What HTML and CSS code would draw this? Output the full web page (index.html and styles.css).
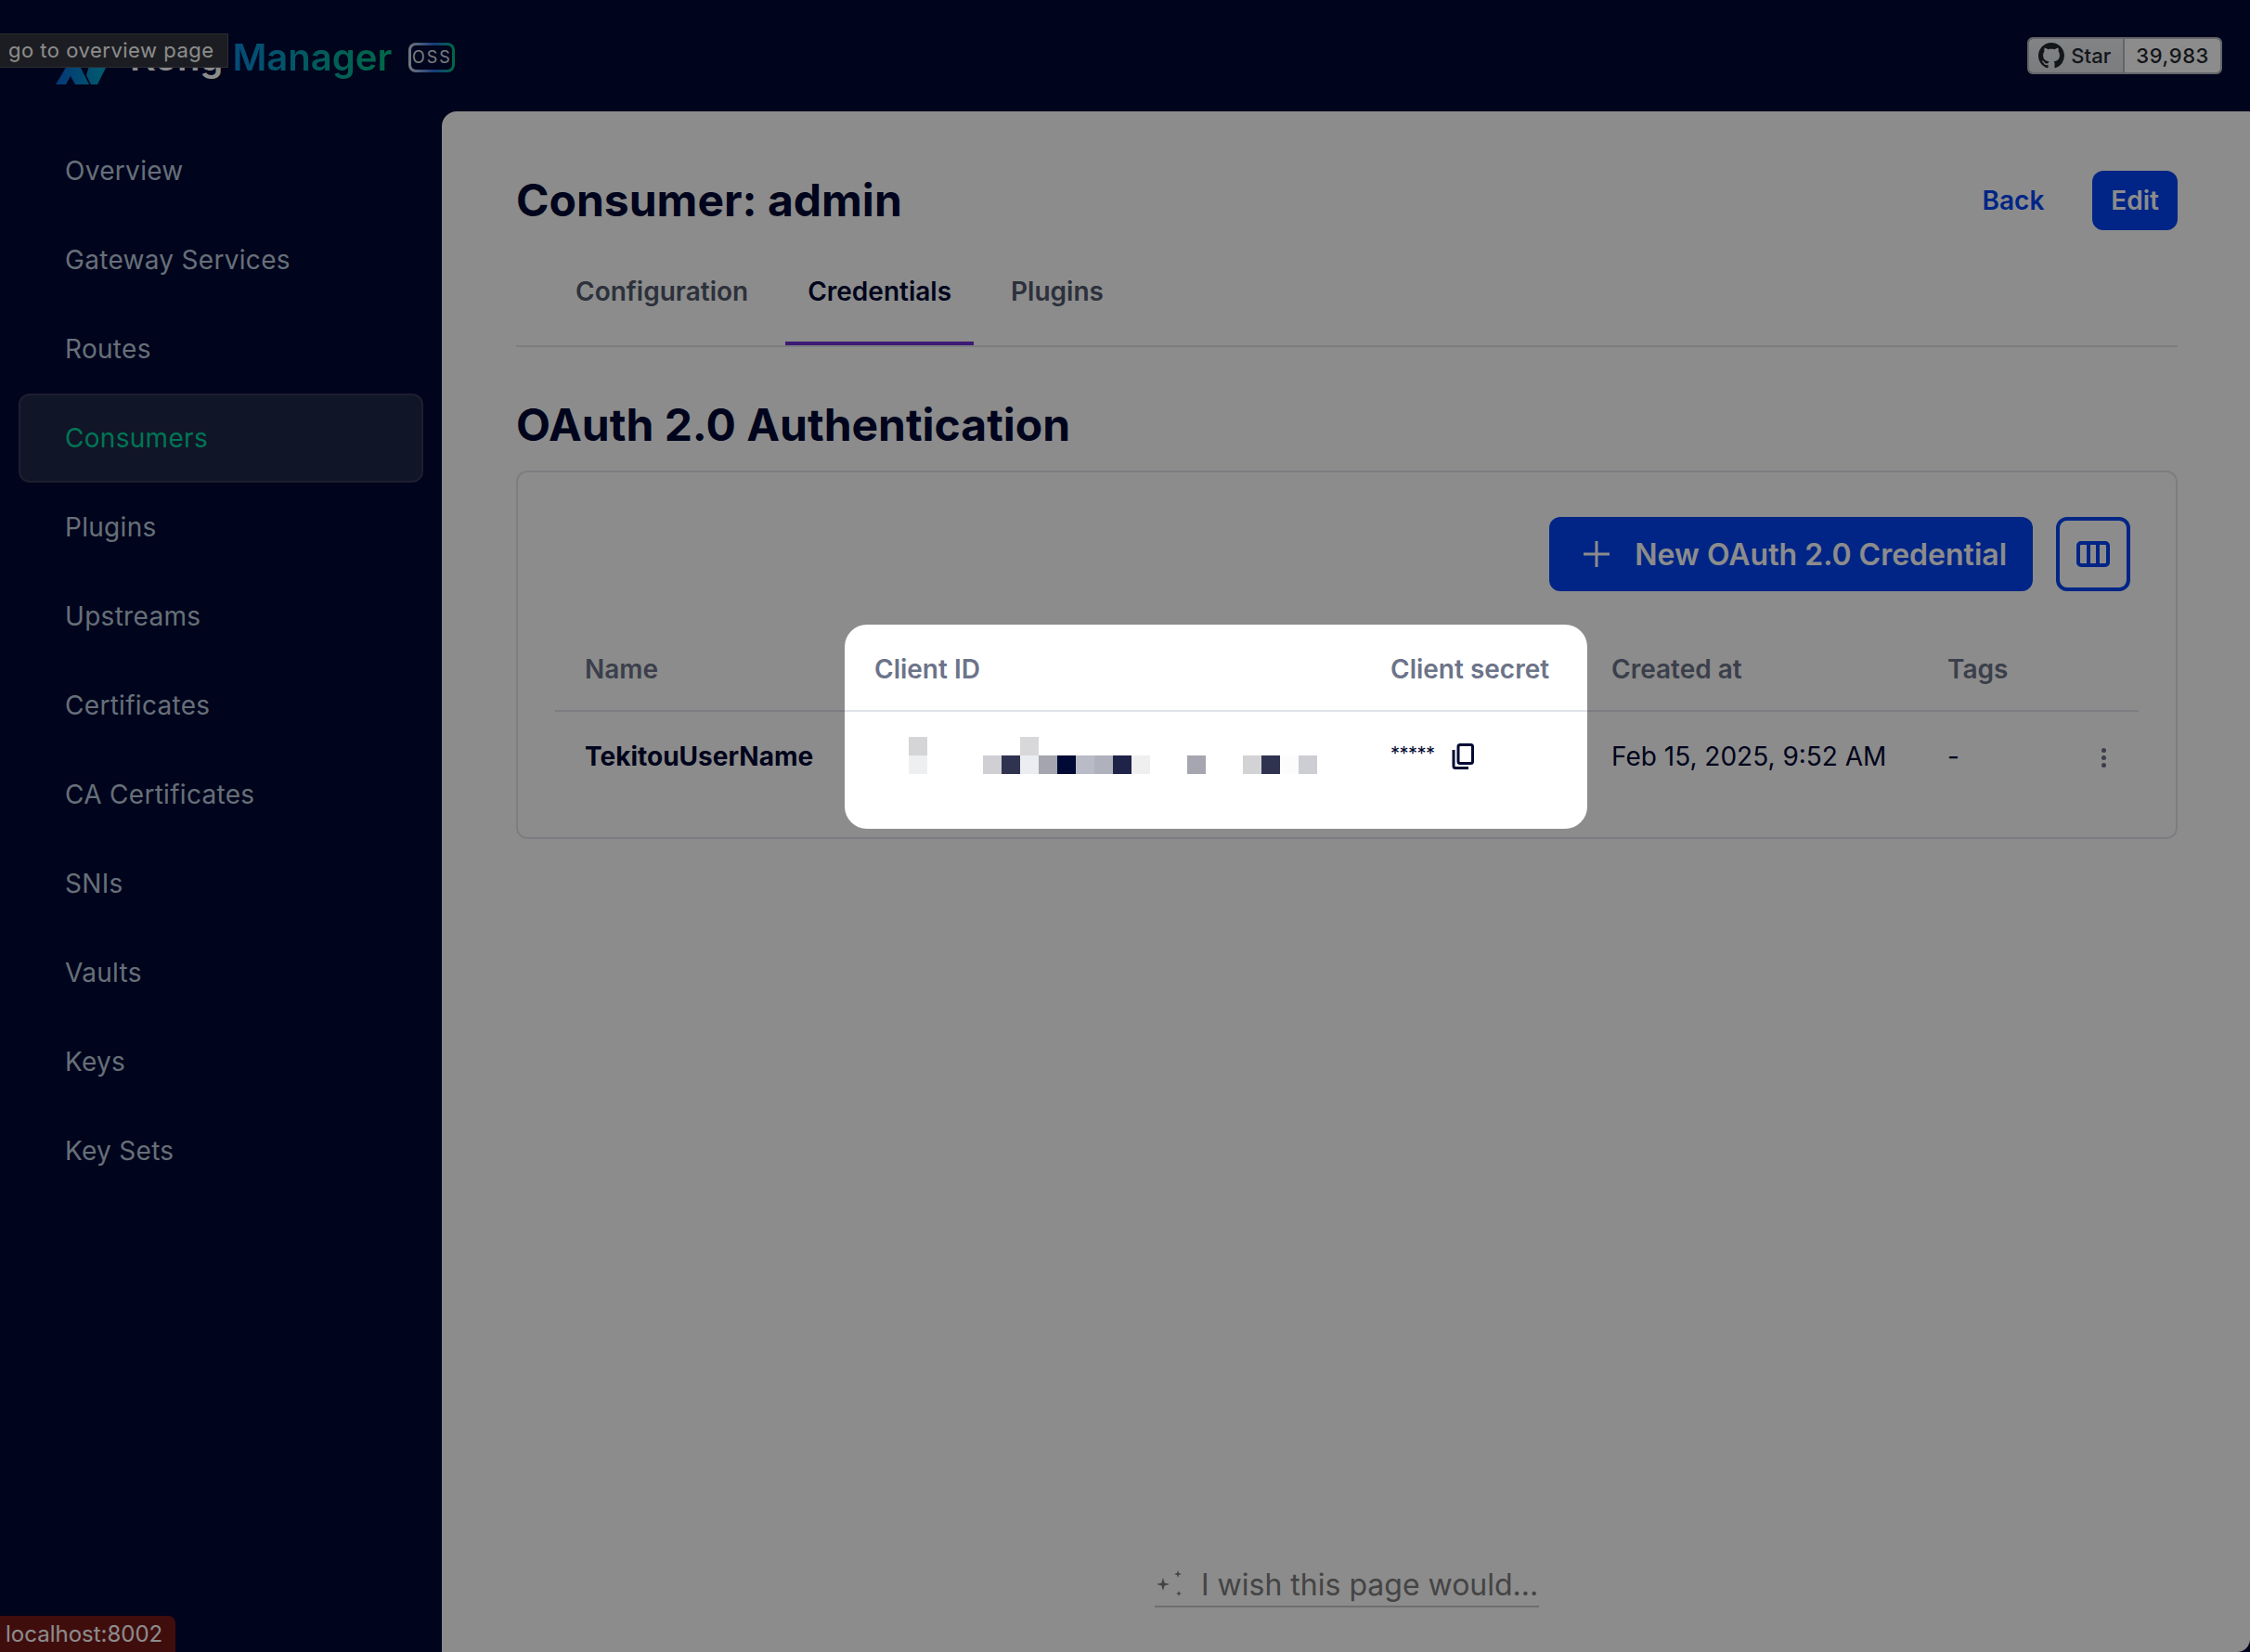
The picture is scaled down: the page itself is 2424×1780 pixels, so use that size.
FILE: index.html
```html
<!DOCTYPE html>
<html lang="en">
<head>
<meta charset="utf-8">
<title>Kong Manager</title>
<link rel="stylesheet" href="styles.css">
</head>
<body>
<div class="app">
  <header class="topbar">
    <a class="brand">
      <svg class="brand-logo" viewBox="0 0 55 50" aria-hidden="true">
        <defs><linearGradient id="lg" x1="0" x2="1" y1="0" y2="0"><stop offset="0" stop-color="#0a66d8"/><stop offset="1" stop-color="#00a8c8"/></linearGradient></defs>
        <path fill="url(#lg)" d="M0 50 12 30h14l10 20H21l-5-9-5 9zM36 30h14l5 0-10 20h-7l-5-10z"/>
      </svg>
      <span class="brand-name"><span class="brand-kong">Kong</span> <span class="brand-manager">Manager</span></span>
      <span class="oss">OSS</span>
    </a>
    <div class="gh">
      <span class="gh-star">
        <svg class="gh-icon" viewBox="0 0 16 16" aria-hidden="true"><path fill="#24292e" d="M8 0C3.58 0 0 3.58 0 8c0 3.54 2.29 6.53 5.47 7.59.4.07.55-.17.55-.38 0-.19-.01-.82-.01-1.49-2.01.37-2.53-.49-2.69-.94-.09-.23-.48-.94-.82-1.13-.28-.15-.68-.52-.01-.53.63-.01 1.08.58 1.23.82.72 1.21 1.87.87 2.33.66.07-.52.28-.87.51-1.07-1.78-.2-3.64-.89-3.64-3.95 0-.87.31-1.59.82-2.15-.08-.2-.36-1.02.08-2.12 0 0 .67-.21 2.2.82.64-.18 1.32-.27 2-.27.68 0 1.36.09 2 .27 1.53-1.04 2.2-.82 2.2-.82.44 1.1.16 1.92.08 2.12.51.56.82 1.27.82 2.15 0 3.07-1.87 3.75-3.65 3.95.29.25.54.73.54 1.48 0 1.07-.01 1.93-.01 2.2 0 .21.15.46.55.38A8.013 8.013 0 0016 8c0-4.42-3.58-8-8-8z"/></svg>
        Star
      </span>
      <span class="gh-count">39,983</span>
    </div>
  </header>

  <nav class="sidebar">
    <a class="nav-item">Overview</a>
    <a class="nav-item">Gateway Services</a>
    <a class="nav-item">Routes</a>
    <a class="nav-item is-active">Consumers</a>
    <a class="nav-item">Plugins</a>
    <a class="nav-item">Upstreams</a>
    <a class="nav-item">Certificates</a>
    <a class="nav-item">CA Certificates</a>
    <a class="nav-item">SNIs</a>
    <a class="nav-item">Vaults</a>
    <a class="nav-item">Keys</a>
    <a class="nav-item">Key Sets</a>
  </nav>

  <main class="main">
    <div class="page-head">
      <h1 class="page-title">Consumer: admin</h1>
      <div class="page-actions">
        <a class="btn-link">Back</a>
        <a class="btn-edit">Edit</a>
      </div>
    </div>
    <div class="tabs">
      <a class="tab">Configuration</a>
      <a class="tab is-active">Credentials</a>
      <a class="tab">Plugins</a>
    </div>
    <h2 class="section-title">OAuth 2.0 Authentication</h2>
    <section class="card">
      <div class="toolbar">
        <a class="btn-new">
          <svg class="plus" viewBox="0 0 30 30" aria-hidden="true"><path d="M15 1v28M1 15h28" fill="none" stroke="currentColor" stroke-width="3"/></svg>
          New OAuth 2.0 Credential
        </a>
        <a class="btn-cols">
          <svg class="cols" viewBox="0 0 36 28" aria-hidden="true"><rect x="2" y="2" width="32" height="24" rx="3" fill="none" stroke="currentColor" stroke-width="4"/><path d="M13 2v24M23 2v24" stroke="currentColor" stroke-width="4"/></svg>
        </a>
      </div>
      <table class="table">
        <colgroup><col class="c-name"><col class="c-id"><col class="c-secret"><col class="c-date"><col class="c-tags"><col class="c-menu"></colgroup>
        <thead>
          <tr><th>Name</th><th>Client ID</th><th>Client secret</th><th>Created at</th><th>Tags</th><th></th></tr>
        </thead>
        <tbody>
          <tr>
            <td class="td-name">TekitouUserName</td>
            <td>
              <svg class="mosaic" viewBox="0 0 440 40" width="440" height="40" shape-rendering="crispEdges" aria-hidden="true">
                <rect x="0" y="0" width="20" height="20" fill="#d5d5d8"/>
                <rect x="120" y="0" width="20" height="20" fill="#d8d8db"/>
                <rect x="0" y="20" width="20" height="20" fill="#eeeff1"/>
                <rect x="80" y="20" width="20" height="20" fill="#cfcfd4"/>
                <rect x="100" y="20" width="20" height="20" fill="#2f3350"/>
                <rect x="120" y="20" width="20" height="20" fill="#ecedf1"/>
                <rect x="140" y="20" width="20" height="20" fill="#a4a5ae"/>
                <rect x="160" y="20" width="20" height="20" fill="#000a35"/>
                <rect x="180" y="20" width="20" height="20" fill="#b9bcc6"/>
                <rect x="200" y="20" width="20" height="20" fill="#afb2bc"/>
                <rect x="220" y="20" width="20" height="20" fill="#1f2347"/>
                <rect x="240" y="20" width="20" height="20" fill="#efefef"/>
                <rect x="300" y="20" width="20" height="20" fill="#a5a6af"/>
                <rect x="360" y="20" width="20" height="20" fill="#d3d3d5"/>
                <rect x="380" y="20" width="20" height="20" fill="#2f3350"/>
                <rect x="400" y="20" width="20" height="20" fill="#fcfcfd"/>
                <rect x="420" y="20" width="20" height="20" fill="#cdced4"/>
              </svg>
            </td>
            <td>
              <span class="secret">*****</span>
              <svg class="copy" viewBox="0 0 24 28" aria-hidden="true"><rect x="7" y="1.5" width="15.5" height="20" rx="2" fill="none" stroke="#000933" stroke-width="3"/><path d="M2 7v17.5a2 2 0 0 0 2 2h14" fill="none" stroke="#000933" stroke-width="3"/></svg>
            </td>
            <td>Feb 15, 2025, 9:52 AM</td>
            <td>-</td>
            <td class="td-menu"><span class="kebab"><i></i><i></i><i></i></span></td>
          </tr>
        </tbody>
      </table>
    </section>
    <div class="wish">
      <svg class="sparkles" viewBox="0 0 32 32" aria-hidden="true"><path fill="#7a7a7a" d="M9 9l1.6 5.4L16 16l-5.400 1.600L9 23l-1.600-5.400L2 16l5.400-1.600zM25 1l1 3 3 1-3 1-1 3-1-3-3-1 3-1zM26 23l.8 2.200L29 26l-2.200.8L26 29l-.8-2.200L23 26l2.200-.8z"/></svg>
      <span>I wish this page would...</span>
    </div>
  </main>
</div>

<div class="tooltip">go to overview page</div>
<div class="host">localhost:8002</div>
<div class="spotlight"></div>
</body>
</html>
```

FILE: styles.css
```css
* { box-sizing: border-box; }
html, body { height: 100%; }
body {
  margin: 0;
  overflow: hidden;
  background: #000933;
  font-family: Inter, "Noto Sans", "Liberation Sans", sans-serif;
  color: #000933;
}
.app {
  display: grid;
  grid-template-columns: 476px 1fr;
  grid-template-rows: 120px 1fr;
  height: 100vh;
}

/* top bar */
.topbar {
  grid-column: 1 / -1;
  display: flex;
  align-items: center;
  justify-content: space-between;
  padding: 0 30px 0 60px;
}
.brand { display: flex; align-items: center; height: 64px; margin-top: 4px; }
.brand-logo { width: 55px; height: 50px; margin-top: 7px; }
.brand-name { margin-left: 25px; font-size: 40px; font-weight: 600; line-height: 48px; white-space: pre; }
.brand-kong { color: #fff; }
.brand-manager {
  background: linear-gradient(90deg, #0a88dd 0%, #00c080 100%);
  -webkit-background-clip: text;
  background-clip: text;
  color: transparent;
}
.oss {
  margin-left: 18px;
  width: 50px;
  height: 32px;
  border: 3px solid transparent;
  border-radius: 8px;
  background:
    linear-gradient(#000933, #000933) padding-box,
    linear-gradient(90deg, #d5dbe5 0%, #2a6be0 55%, #00c080 100%) border-box;
  color: #dfe3ea;
  font-size: 18px;
  letter-spacing: 2px;
  line-height: 26px;
  text-align: center;
}
.gh {
  display: flex;
  height: 40px;
  border: 2px solid #b4b9c0;
  border-radius: 6px;
  font-size: 22px;
  font-weight: 500;
  color: #24292e;
  overflow: hidden;
}
.gh-star {
  display: flex;
  align-items: center;
  gap: 7px;
  width: 103px;
  padding-left: 10px;
  background: linear-gradient(180deg, #eef0f3, #dfe2e6);
  border-right: 2px solid #b4b9c0;
}
.gh-icon { width: 28px; height: 28px; }
.gh-count {
  display: flex;
  align-items: center;
  padding: 0 12px;
  background: #fff;
  letter-spacing: 0.6px;
}

/* sidebar */
.sidebar { display: flex; flex-direction: column; padding: 16px 20px 0; }
.nav-item {
  display: flex;
  align-items: center;
  height: 96px;
  padding-left: 48px;
  border: 2px solid transparent;
  border-radius: 12px;
  font-size: 28px;
  letter-spacing: 0.3px;
  color: #bccbdc;
}
.nav-item.is-active {
  color: #00d69a;
  background: #1e2747;
  border-color: #35395a;
}

/* main */
.main {
  display: flex;
  flex-direction: column;
  padding: 64px 78px 48px 80px;
  background: #fff;
  border-radius: 16px 0 14px 0;
}
.page-head { display: flex; align-items: center; justify-content: space-between; height: 64px; }
.page-title { margin: 0; font-size: 48px; font-weight: 700; line-height: 64px; }
.page-actions { display: flex; align-items: center; gap: 52px; }
.btn-link { font-size: 28px; font-weight: 600; color: #0044f4; }
.btn-edit {
  display: flex;
  align-items: center;
  height: 64px;
  padding: 0 20px;
  border-radius: 12px;
  background: #0044f4;
  color: #fff;
  font-size: 28px;
  font-weight: 600;
}
.tabs {
  display: flex;
  gap: 16px;
  height: 114px;
  margin-top: 12px;
  padding-left: 40px;
  border-bottom: 2px solid #e0e4ea;
}
.tab {
  display: flex;
  align-items: center;
  height: 112px;
  padding: 0 24px;
  border-bottom: 4px solid transparent;
  font-size: 28px;
  font-weight: 600;
  color: #52596e;
}
.tab.is-active { color: #000933; border-bottom-color: #7030d4; }
.section-title { margin: 54px 0 0; font-size: 48px; font-weight: 700; line-height: 60px; }
.card {
  margin-top: 19px;
  padding: 48px 40px 40px;
  border: 2px solid #e0e4ea;
  border-radius: 12px;
}
.toolbar { display: flex; justify-content: flex-end; gap: 25px; padding-right: 9px; height: 80px; }
.btn-new {
  display: flex;
  align-items: center;
  gap: 26px;
  height: 80px;
  padding: 0 28px 0 36px;
  border-radius: 12px;
  background: #0044f4;
  color: #fff;
  font-size: 32px;
  font-weight: 600;
}
.plus { width: 30px; height: 30px; }
.btn-cols {
  display: flex;
  align-items: center;
  justify-content: center;
  width: 80px;
  height: 80px;
  border: 4px solid #0044f4;
  border-radius: 12px;
  color: #0044f4;
}
.cols { width: 36px; height: 28px; }

/* table */
.table { width: 1706px; margin-top: 40px; border-collapse: collapse; table-layout: fixed; font-size: 28px; }
.c-name { width: 312px; }
.c-id { width: 556px; }
.c-secret { width: 238px; }
.c-date { width: 362px; }
.c-tags { width: 152px; }
.table th {
  height: 89px;
  padding: 0 0 0 32px;
  border-bottom: 2px solid #e0e4ea;
  text-align: left;
  font-weight: 600;
  color: #6c7489;
  white-space: nowrap;
}
.table td { height: 96px; padding: 0 0 0 32px; white-space: nowrap; }
.td-name { font-weight: 700; }
.mosaic { display: block; margin: 0 0 -2px 37px; transform: translateY(-2px); }
.secret { display: inline-block; width: 42px; font-size: 20px; vertical-align: 6px; letter-spacing: -0.5px; }
.copy { width: 24px; height: 28px; margin-left: 16px; vertical-align: -4px; }
.td-menu { text-align: left; }
.kebab { display: inline-flex; flex-direction: column; gap: 3px; margin-left: 14px; vertical-align: middle; }
.kebab i { display: block; width: 5px; height: 5px; border-radius: 50%; background: #6c7489; }

/* feedback input */
.wish {
  display: flex;
  align-items: center;
  gap: 18px;
  align-self: center;
  margin-top: auto;
  width: 414px;
  height: 48px;
  border-bottom: 2px solid #c8c8c8;
  font-size: 32px;
  color: #7c7c7c;
  white-space: nowrap;
}
.sparkles { width: 32px; height: 32px; flex: none; }

/* overlays */
.tooltip {
  position: absolute;
  left: -2px;
  top: 36px;
  height: 37px;
  padding: 0 14px 0 10px;
  background: #33353f;
  border: 1px solid #50525a;
  color: #fff;
  font-size: 22px;
  line-height: 34px;
  letter-spacing: 0.5px;
}
.host {
  position: absolute;
  left: 0;
  bottom: 0;
  width: 189px;
  height: 39px;
  padding-left: 6px;
  background: #761818;
  border-top-right-radius: 8px;
  color: #fff;
  font-size: 24px;
  line-height: 39px;
}
.spotlight {
  position: absolute;
  left: 910px;
  top: 673px;
  width: 800px;
  height: 220px;
  border-radius: 24px;
  box-shadow: 0 0 0 3000px rgba(0, 0, 0, 0.45);
}
```
